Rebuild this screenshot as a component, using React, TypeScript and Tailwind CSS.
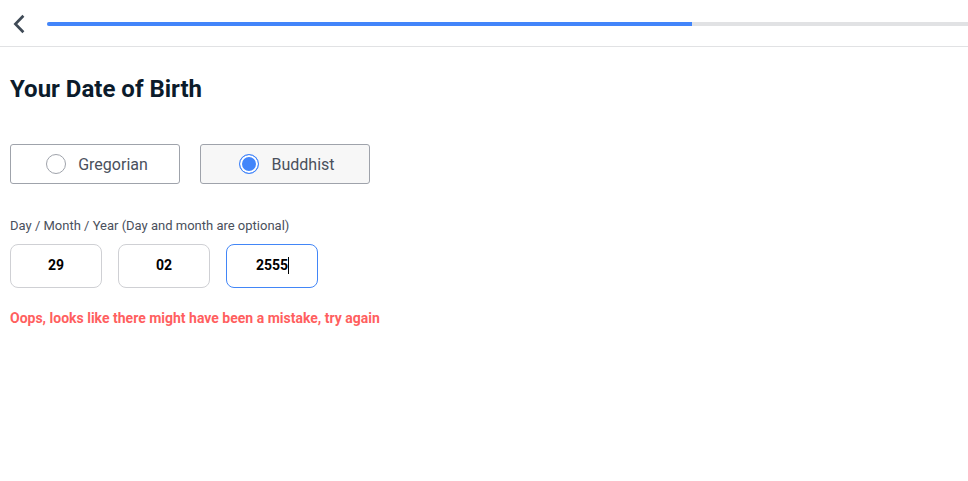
import { useState } from 'react';

const calendars = ['Gregorian', 'Buddhist'];

const fieldClass =
  'h-11 w-[92px] rounded-lg border border-[#cfd0d4] pb-0.5 text-center text-sm font-bold text-black outline-none focus:border-[#4286f7]';

export default function App() {
  const [calendar, setCalendar] = useState('Buddhist');
  return (
    <div className="min-h-screen bg-white font-['Roboto',sans-serif] text-[#0b1b2b]">
      <header className="flex h-[47px] items-center border-b border-[#e1e2e4] pt-0.5">
        <button type="button" aria-label="Back" className="flex w-[47px] items-center pl-3">
          <svg width="14" height="20" viewBox="0 0 14 20" fill="none" stroke="#3f4a56" strokeWidth="2.7">
            <path d="M11.4 1.7 L3.4 10 L11.4 18.3" />
          </svg>
        </button>
        <div
          role="progressbar"
          aria-label="Progress"
          aria-valuenow={70}
          className="h-1 flex-1 overflow-hidden rounded-l-full bg-[#e1e2e4]"
        >
          <div className="h-full w-[70%] bg-[#4285fa]" />
        </div>
      </header>
      <main className="px-[10px] pt-[26px]">
        <h1 className="text-2xl font-bold">Your Date of Birth</h1>
        <div role="radiogroup" aria-label="Calendar" className="mt-[39px] flex gap-5">
          {calendars.map((name) => (
            <label
              key={name}
              className="flex h-10 w-[170px] items-center justify-center gap-3 rounded-[3px] border border-[#9fa3ab] pl-1 text-base text-[#4a505c] has-checked:bg-[#f7f7f7]"
            >
              <input
                type="radio"
                name="calendar"
                checked={calendar === name}
                onChange={() => setCalendar(name)}
                className="size-5 appearance-none rounded-full border border-[#9fa3ab] bg-white checked:border-[#4285fa] checked:bg-[#4285fa] checked:shadow-[inset_0_0_0_2px_white]"
              />
              <span className="pt-0.5">{name}</span>
            </label>
          ))}
        </div>
        <fieldset className="mt-8">
          <legend className="text-[13px] leading-5 text-[#4a505c]">Day / Month / Year (Day and month are optional)</legend>
          <div className="mt-2 flex gap-4">
            <input aria-label="Day" defaultValue="29" inputMode="numeric" className={fieldClass} />
            <input aria-label="Month" defaultValue="02" inputMode="numeric" className={fieldClass} />
            <div className="group relative">
              <input
                aria-label="Year"
                defaultValue="2555"
                inputMode="numeric"
                autoFocus
                className={`${fieldClass} caret-transparent`}
              />
              <span
                aria-hidden="true"
                className="pointer-events-none absolute left-[62px] top-[13px] hidden h-[17px] w-px bg-black group-focus-within:block"
              />
            </div>
          </div>
        </fieldset>
        <p role="alert" className="mt-5 text-sm font-bold text-[#ff5f5f]">
          Oops, looks like there might have been a mistake, try again
        </p>
      </main>
    </div>
  );
}
